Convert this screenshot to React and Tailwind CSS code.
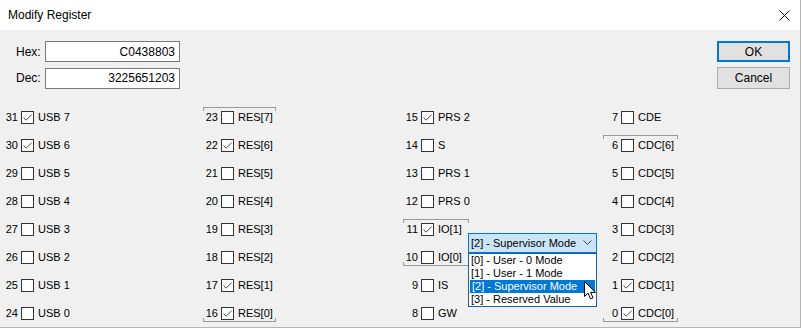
import React from 'react';

const font = { fontFamily: '"Liberation Sans", Arial, sans-serif' };

const Box = ({ checked }) => (
  <span className="ml-[3px] flex h-[13px] w-[13px] shrink-0 items-center justify-center border border-[#333333] bg-white">
    {checked && (
      <svg width="11" height="11" viewBox="0 0 11 11">
        <path d="M1.5 5.5 L4.2 8.2 L9.6 2.6" fill="none" stroke="#4d4d4d" strokeWidth="1" />
      </svg>
    )}
  </span>
);

const Row = ({ n, label, checked }) => (
  <div className="flex h-[28px] items-center text-[11px] text-black">
    <span className="w-[18px] text-right">{n}</span>
    <Box checked={checked} />
    <span className="ml-[4px] whitespace-nowrap">{label}</span>
  </div>
);

const Bracket = ({ width }) => (
  <>
    <span className="absolute left-[3px] top-[4px] h-[4px] border-x border-t border-[#9a9a9a]" style={{ width }} />
    <span className="absolute bottom-[5px] left-[3px] h-[4px] border-x border-b border-[#9a9a9a]" style={{ width }} />
  </>
);

const Combo = () => (
  <div className="relative h-[20px] w-[129px] text-[11px]">
    <div className="flex h-full items-center justify-between border border-[#0078d7] bg-[#cce4f7] pl-[2px] pr-[4px]">
      <span className="whitespace-nowrap">[2] - Supervisor Mode</span>
      <svg width="9" height="6" viewBox="0 0 9 6">
        <path d="M0.5 0.5 L4.5 4.5 L8.5 0.5" fill="none" stroke="#444" strokeWidth="1" />
      </svg>
    </div>
    <div className="absolute left-0 top-full flex w-[129px] flex-col border border-[#1c5fa6] bg-white py-0">
      {['[0] - User - 0 Mode', '[1] - User - 1 Mode', '[2] - Supervisor Mode', '[3] - Reserved Value'].map((t, i) => (
        <div
          key={t}
          className={
            'flex h-[13px] items-center pl-[2px] leading-none whitespace-nowrap ' +
            (i === 2 ? 'mx-[1px] bg-[#0078d7] pl-[1px] text-white' : 'text-black')
          }
        >
          {t}
        </div>
      ))}
    </div>
    <svg className="absolute left-[116px] top-[48px]" width="13" height="20" viewBox="0 0 13 20">
      <path d="M0.5 0.5 L0.5 15.5 L4 12 L6.5 17.8 L9 16.8 L6.6 11.3 L11.5 11.3 Z" fill="white" stroke="black" strokeWidth="1" strokeLinejoin="miter" />
    </svg>
  </div>
);

const col1 = [7, 6, 5, 4, 3, 2, 1, 0].map((i) => ({ n: 24 + i, label: `USB ${i}`, checked: i >= 6 }));
const col2 = [7, 6, 5, 4, 3, 2, 1, 0].map((i) => ({ n: 16 + i, label: `RES[${i}]`, checked: [6, 1, 0].includes(i) }));
const cdc = [6, 5, 4, 3, 2, 1, 0].map((i) => ({ n: i, label: `CDC[${i}]`, checked: i <= 1 }));

export default function App() {
  return (
    <div className="h-[329px] w-[802px] bg-white" style={font}>
      <div className="flex h-[328px] w-[801px] flex-col border-b border-r border-[#b4b4b4] bg-[#f0f0f0]">
        <div className="flex h-[30px] shrink-0 items-center justify-between bg-white pl-[8px] pr-[10px] text-[12px] text-black">
          <span>Modify Register</span>
          <svg width="11" height="11" viewBox="0 0 11 11">
            <path d="M0.5 0.5 L10.5 10.5 M10.5 0.5 L0.5 10.5" stroke="#111" strokeWidth="1" />
          </svg>
        </div>

        <div className="flex justify-between pr-[10px] pt-[11px] text-[12px]">
          <div className="grid grid-cols-[29px_135px] items-center gap-y-[5px] pl-[16px]">
            <span>Hex:</span>
            <div className="flex h-[21px] items-center justify-end border border-[#7a7a7a] bg-white pr-[4px]">C0438803</div>
            <span>Dec:</span>
            <div className="flex h-[21px] items-center justify-end border border-[#7a7a7a] bg-white pr-[4px]">3225651203</div>
          </div>
          <div className="flex flex-col gap-[5px]">
            <button className="h-[21px] w-[73px] border-2 border-[#0078d7] bg-[#e1e1e1] text-[12px]">OK</button>
            <button className="h-[22px] w-[73px] border border-[#adadad] bg-[#e1e1e1] text-[12px]">Cancel</button>
          </div>
        </div>

        <div className="mt-[14px] grid grid-cols-[200px_200px_200px_200px]">
          <div>
            {col1.map((r) => (
              <Row key={r.n} {...r} />
            ))}
          </div>
          <div className="relative">
            <Bracket width="73px" />
            {col2.map((r) => (
              <Row key={r.n} {...r} />
            ))}
          </div>
          <div>
            <Row n={15} label="PRS 2" checked />
            <Row n={14} label="S" />
            <Row n={13} label="PRS 1" />
            <Row n={12} label="PRS 0" />
            <div className="flex items-center">
              <div className="relative w-[68px]">
                <Bracket width="66px" />
                <Row n={11} label="IO[1]" checked />
                <Row n={10} label="IO[0]" />
              </div>
              <Combo />
            </div>
            <Row n={9} label="IS" />
            <Row n={8} label="GW" />
          </div>
          <div>
            <Row n={7} label="CDE" />
            <div className="relative">
              <Bracket width="75px" />
              {cdc.map((r) => (
                <Row key={r.n} {...r} />
              ))}
            </div>
          </div>
        </div>
      </div>
    </div>
  );
}
